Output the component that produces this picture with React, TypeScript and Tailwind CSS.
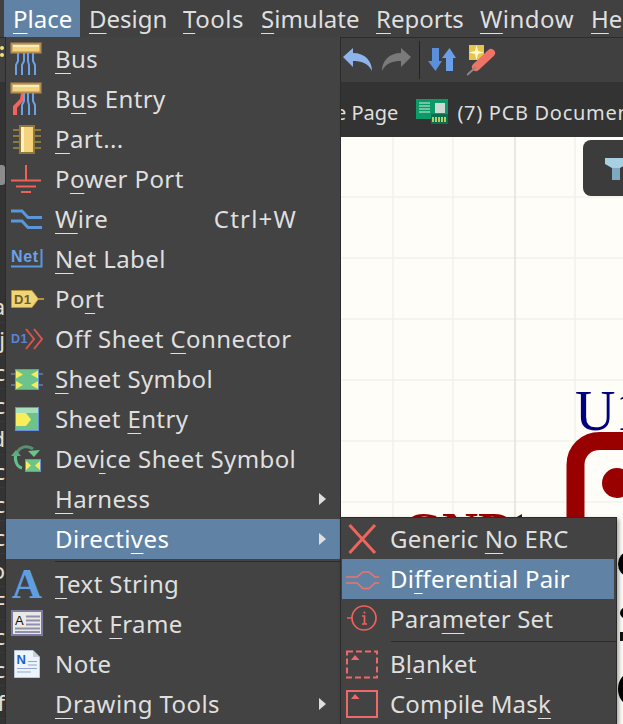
import React from "react";

const L = ({ a = "", u, b = "" }: { a?: string; u?: string; b?: string }) => (
  <span className="whitespace-pre">
    {a}
    {u ? <span className="underline decoration-1 underline-offset-[5px]">{u}</span> : null}
    {b}
  </span>
);

const Ico = ({ children }: { children: React.ReactNode }) => (
  <svg width="36" height="36" viewBox="0 0 36 36" className="shrink-0" fill="none">
    {children}
  </svg>
);

const BLUE = "#6aa2ea";
const RED = "#ee625a";

const Header = () => (
  <>
    <rect x="2.5" y="2.5" width="29" height="9" fill="#f2d37f" stroke="#b68c52" strokeWidth="2" />
    <rect x="4" y="4" width="26" height="2" fill="#fbeec0" />
  </>
);

const BusIcon = () => (
  <Ico>
    <Header />
    <g stroke={BLUE} strokeWidth="2">
      <path d="M9 12V20L7 24V34" />
      <path d="M15 12V20L13 24V34" />
      <path d="M19 12V20L20 24V34" />
      <path d="M24 12V20L26 24V34" />
    </g>
  </Ico>
);
const BusEntryIcon = () => (
  <Ico>
    <Header />
    <path d="M12 12L11 18L4 25V34H8V27L14 20L16 12Z" fill="#f2645c" />
    <g stroke={BLUE} strokeWidth="2">
      <path d="M15 12V20L13 24V34" />
      <path d="M19 12V20L20 24V34" />
      <path d="M24 12V20L26 24V34" />
    </g>
  </Ico>
);
const PartIcon = () => (
  <Ico>
    <g stroke="#8f7a3c" strokeWidth="2">
      <path d="M4 9H10M4 15H10M4 21H10M4 27H10M26 9H32M26 15H32M26 21H32M26 27H32" />
      <rect x="11" y="5" width="14" height="27" fill="#f5d47d" />
    </g>
    <rect x="12" y="6" width="3" height="25" fill="#fdf1c8" />
  </Ico>
);
const PowerIcon = () => (
  <Ico>
    <path d="M17 4V19M2 19.5H32M7 25.5H27M12 31H22" stroke={RED} strokeWidth="2" />
  </Ico>
);
const WireIcon = () => (
  <Ico>
    <path d="M2 10H13L19 16.5H33M2 20H13L19 26.5H33" stroke="#5a97d8" strokeWidth="3" />
  </Ico>
);
const NetIcon = () => (
  <Ico>
    <text x="2" y="21" fontFamily="Liberation Sans" fontWeight="700" fontSize="16" letterSpacing="0.6" fill="#6aa2ea">
      Net
    </text>
    <path d="M2 25.5H32.5V8" stroke="#5a97e0" strokeWidth="2" />
  </Ico>
);
const PortIcon = () => (
  <Ico>
    <path d="M29 18H35" stroke="#b5933f" strokeWidth="2" />
    <path d="M2.5 9.5H23L29.5 18L23 26.5H2.5Z" fill="#f0d478" stroke="#b5933f" />
    <text x="5" y="23" fontFamily="Liberation Sans" fontWeight="700" fontSize="13" fill="#6e5c2a">
      D1
    </text>
  </Ico>
);
const OffIcon = () => (
  <Ico>
    <text x="2" y="22" fontFamily="Liberation Sans" fontWeight="700" fontSize="12.5" fill="#5a82d8">
      D1
    </text>
    <path d="M17 8L25 18L17 28M25 8L33 18L25 28" stroke="#d8544c" strokeWidth="2" />
  </Ico>
);
const SymIcon = () => (
  <Ico>
    <path d="M2 13H7M2 24H7M29 13H34M29 24H34" stroke="#7a9de0" />
    <rect x="6.5" y="8.5" width="23" height="20" fill="#6cc48a" stroke="#6a8fdc" />
    <path d="M7 9.5L14 13.5L7 17.5ZM7 20L14 24L7 28ZM29 9.5L22 13.5L29 17.5ZM29 20L22 24L29 28Z" fill="#f5ec5a" />
  </Ico>
);
const EntryIcon = () => (
  <Ico>
    <rect x="6.5" y="6.5" width="23" height="23" fill="#6cc48a" stroke="#6a8fdc" />
    <rect x="7" y="7" width="22" height="5" fill="#a6e0bb" />
    <path d="M7 12H17L22 18.5L17 25H7Z" fill="#f8ee5c" />
  </Ico>
);
const DeviceIcon = () => (
  <Ico>
    <path d="M8 12C11 5 19 4 24 8" stroke="#5c8f72" strokeWidth="3" />
    <path d="M19 10L31 9L25 16Z" fill="#6cc48a" />
    <path d="M7 13C5 19 8 26 13 27" stroke="#62c08a" strokeWidth="3" />
    <path d="M2 15L12 15L7 9Z" fill="#62a880" />
    <rect x="16.5" y="18.5" width="15" height="12" fill="#6cc48a" stroke="#6a8fdc" />
    <path d="M17 20L22 24.5L17 29ZM31 20L26 24.5L31 29Z" fill="#f5ec5a" />
  </Ico>
);
const TextIcon = () => (
  <Ico>
    <text x="18" y="32" textAnchor="middle" fontFamily="Liberation Serif" fontWeight="700" fontSize="42" fill="#5f9ee0">
      A
    </text>
  </Ico>
);
const FrameIcon = () => (
  <Ico>
    <rect x="3" y="5" width="30" height="24" fill="#ece9e4" stroke="#7c7ca2" strokeWidth="2" />
    <text x="6" y="19" fontFamily="Liberation Sans" fontSize="13" fill="#111">
      A
    </text>
    <path d="M17 10.5H31M17 14.5H31M17 18.5H31M6 22.5H31M6 26H31" stroke="#8f90ad" strokeWidth="2" />
  </Ico>
);
const NoteIcon = () => (
  <Ico>
    <path d="M5.5 4.5H24L30.5 11V31.5H5.5Z" fill="#eef4fb" stroke="#bcc8d8" />
    <path d="M24 4.5V11H30.5Z" fill="#c6cfda" />
    <text x="7.5" y="18" fontFamily="Liberation Sans" fontWeight="700" fontSize="13" fill="#1c62c8">
      N
    </text>
    <path d="M19 15.5H28M19 19H28M8 22.5H28M8 26H22" stroke="#8ea8d2" />
  </Ico>
);
const XIcon = () => (
  <Ico>
    <path d="M5.5 4L31 32M31 4L5.5 32" stroke="#ee655c" strokeWidth="3" />
  </Ico>
);
const DiffIcon = () => (
  <Ico>
    <path d="M2 16H13L19 11H25L31 16H35M2 22H13L19 27.5H25L31 22H35" stroke="#f0736a" strokeWidth="1.5" />
  </Ico>
);
const ParamIcon = () => (
  <Ico>
    <circle cx="20" cy="17" r="12" stroke={RED} strokeWidth="1.7" />
    <path d="M3 17H8M18 15H20.5V23M18 23H23M20.5 10.5V12.5" stroke={RED} strokeWidth="1.7" />
  </Ico>
);
const BlanketIcon = () => (
  <Ico>
    <rect x="3" y="5.5" width="30" height="26" stroke="#f0696a" strokeWidth="2" strokeDasharray="6 3" />
    <path d="M7 14L11 9L15.5 14Z" fill="#f0696a" />
  </Ico>
);
const MaskIcon = () => (
  <Ico>
    <rect x="3" y="5" width="30" height="26" stroke="#f0696a" strokeWidth="2" />
    <path d="M7 13L11 8L15.5 13Z" fill="#f0696a" />
  </Ico>
);

const Arrow = () => (
  <span className="ml-auto mr-[14px] h-0 w-0 border-y-[6px] border-l-[7px] border-y-transparent border-l-[#dedede]" />
);

const Row = ({
  icon,
  children,
  shortcut,
  sub,
  active,
}: {
  icon?: React.ReactNode;
  children: React.ReactNode;
  shortcut?: string;
  sub?: boolean;
  active?: boolean;
}) => (
  <div className={`flex h-10 items-center pl-[3px] ${active ? "bg-[#6083a5] text-white" : ""}`}>
    <div className="w-[36px] shrink-0">{icon}</div>
    <div className="ml-[10px]">{children}</div>
    {shortcut ? <span className="ml-auto mr-[43px] tracking-[1.2px]">{shortcut}</span> : null}
    {sub ? <Arrow /> : null}
  </div>
);

const SubRow = ({ icon, children, active }: { icon: React.ReactNode; children: React.ReactNode; active?: boolean }) => (
  <div className={`flex h-10 items-center pl-[2px] ${active ? "bg-[#6083a5] text-white" : ""}`}>
    <div className="w-[36px] shrink-0">{icon}</div>
    <div className="ml-[10px]">{children}</div>
  </div>
);

const MenuTitle = ({ children, className = "" }: { children: React.ReactNode; className?: string }) => (
  <div className={`flex h-[37px] shrink-0 items-center pl-[9px] ${className}`}>{children}</div>
);

const LETTERS = ["a", "j", "c", "c", "d", "c", "c", "c", "o", "F", "c", "c", "f"];

export default function App() {
  return (
    <div
      className="relative flex h-[724px] w-[623px] flex-col overflow-hidden bg-[#3a3a3a] text-[24px] leading-none text-[#dfdfdf]"
      style={{ fontFamily: '"Noto Sans", sans-serif' }}
    >
      {/* menu bar */}
      <div className="flex h-[37px] shrink-0 whitespace-nowrap bg-[#414141] pl-[4px]">
        <MenuTitle className="w-[76px] bg-[#6083a5] text-white"><L u="P" b="lace" /></MenuTitle>
        <MenuTitle className="w-[94px]"><L u="D" b="esign" /></MenuTitle>
        <MenuTitle className="w-[78px] tracking-[0.5px]"><L u="T" b="ools" /></MenuTitle>
        <MenuTitle className="w-[115px]"><L u="S" b="imulate" /></MenuTitle>
        <MenuTitle className="w-[104px]"><L u="R" b="eports" /></MenuTitle>
        <MenuTitle className="w-[111px] tracking-[0.5px]"><L u="W" b="indow" /></MenuTitle>
        <MenuTitle><L u="H" b="elp" /></MenuTitle>
      </div>

      {/* toolbar */}
      <div className="relative flex h-[45px] shrink-0 items-center border-t border-[#2c2c2c] bg-[#404040] pl-[343px]">
        <div className="absolute left-0 top-[8px] h-[4px] w-[4px] rounded-full bg-[#f2e27a]" />
        <div className="absolute left-0 top-[15px] h-[4px] w-[4px] rounded-full bg-[#f2e27a]" />
        <svg width="30" height="26" viewBox="0 0 30 26" className="shrink-0">
          <path d="M0 10L10 1V6C22 6 29 14 29 24C25 16 18 14 10 14V20Z" fill="#8fb4ea" />
        </svg>
        <svg width="30" height="26" viewBox="0 0 30 26" className="ml-[8px] shrink-0">
          <path d="M30 10L20 1V6C8 6 1 14 1 24C5 16 12 14 20 14V20Z" fill="#7a7a7a" />
        </svg>
        <div className="ml-[8px] h-[38px] w-px bg-[#222222]" />
        <svg width="28" height="26" viewBox="0 0 28 26" className="ml-[8px] shrink-0">
          <path d="M4 1H11V14H14L7.5 24L0 14H4Z" fill="#5a8fdc" />
          <path d="M18 24H25V11H28L21.5 1L14 11H18Z" fill="#6a9ee6" />
        </svg>
        <svg width="30" height="31" viewBox="0 0 30 31" className="ml-[11px] shrink-0">
          <rect x="2" y="0" width="15" height="15" fill="#e6c64c" />
          <path d="M9.5 0L11 6L17 7.5L11 9L9.5 15L8 9L2 7.5L8 6Z" fill="#fff8d0" />
          <path d="M9 22L24 8" stroke="#ee7468" strokeWidth="8" strokeLinecap="round" />
          <path d="M0 30L9 22" stroke="#8a8a8a" strokeWidth="2" />
        </svg>
      </div>

      {/* tabs */}
      <div className="flex h-[55px] shrink-0 items-center whitespace-nowrap bg-[#333333] pl-[335px] pt-[3px] text-[20px]">
        <span className="pt-[3px]">e Page</span>
        <svg width="32" height="25" viewBox="0 0 32 25" className="ml-[18px] shrink-0">
          <rect x="0" y="0" width="32" height="20" fill="#0b9a68" />
          <path d="M3 4H14M3 7H14M3 10H14M3 13H14" stroke="#d6f0e0" />
          <rect x="19" y="4" width="10" height="10" fill="#cfd8d4" />
          <rect x="15" y="15" width="17" height="10" fill="#08704c" />
          <path d="M17 18V23M20 18V23M23 18V23M26 18V23M29 18V23" stroke="#f0ec70" strokeWidth="1.5" />
        </svg>
        <span className="ml-[9px] pt-[3px] tracking-[0.7px]">(7) PCB Document</span>
      </div>

      {/* body */}
      <div className="relative flex min-h-0 flex-1">
        <div className="flex w-[341px] shrink-0 flex-col bg-[#333333] pt-[28px] text-[22px] text-[#e8e0d4]">
          <div className="mb-[105px] h-[20px] w-[5px] shrink-0 rounded-r-[3px] bg-[#8c8c8c]" />
          {LETTERS.map((c, i) => (
            <div key={i} className="flex h-[33px] w-[5px] shrink-0 items-center justify-end overflow-hidden border-b border-[#3a3a3a]">
              <span>{c}</span>
            </div>
          ))}
        </div>
        <div className="relative flex-1 bg-[#fffdf8]">
          <svg width="282" height="587" viewBox="341 137 282 587" className="block">
            <path
              d="M393 137V724M453 137V724M575 137V724M341 197H623M341 258H623M341 319H623M341 380H623M341 441H623M341 502H623"
              stroke="#f3f1ec"
              strokeWidth="1.5"
            />
            <path d="M515 137V724" stroke="#e2e0db" strokeWidth="1.5" />
            <text x="575" y="430" fontFamily="Liberation Serif" fontSize="56" fill="#00007f">
              U1
            </text>
            <path d="M575.5 530V465C575.5 451 586 441 600 441H630" stroke="#990000" strokeWidth="18" fill="none" />
            <circle cx="617" cy="483" r="15" fill="#990000" />
            <text x="403" y="547" fontFamily="Liberation Serif" fontWeight="700" fontSize="50" fill="#990000">
              GND
            </text>
            <path d="M515 518L522 514V518Z" fill="#222" />
            <ellipse cx="628" cy="564" rx="10" ry="12" fill="#000" />
            <ellipse cx="627" cy="613" rx="7" ry="6" fill="#000" />
            <rect x="620" y="632" width="3" height="9" fill="#111" />
            <ellipse cx="630" cy="689" rx="12" ry="16" fill="#000" />
          </svg>
        </div>
      </div>

      {/* filter panel */}
      <div className="absolute left-[583px] top-[140px] flex h-[56px] w-[40px] items-center overflow-hidden rounded-l-[8px] bg-[#3c3c3c] pl-[22px]">
        <svg width="22" height="24" viewBox="0 0 22 24" className="shrink-0">
          <path d="M0 2H22V8L15 12V24H7V12L0 8Z" fill="#a9cfe2" />
          <path d="M7 12H15V24H7Z" fill="#7fa9c0" />
        </svg>
      </div>

      {/* main dropdown */}
      <div className="absolute left-[5px] top-[37px] h-[687px] w-[336px] border-x border-[#2b2b2b] bg-[#434343] pt-[2px] tracking-[0.4px]">
        <Row icon={<BusIcon />}><L u="B" b="us" /></Row>
        <Row icon={<BusEntryIcon />}><L a="B" u="u" b="s Entry" /></Row>
        <Row icon={<PartIcon />}><L u="P" b="art..." /></Row>
        <Row icon={<PowerIcon />}><L a="P" u="o" b="wer Port" /></Row>
        <Row icon={<WireIcon />} shortcut="Ctrl+W"><L u="W" b="ire" /></Row>
        <Row icon={<NetIcon />}><L u="N" b="et Label" /></Row>
        <Row icon={<PortIcon />}><L a="Po" u="r" b="t" /></Row>
        <Row icon={<OffIcon />}><L a="Off Sheet " u="C" b="onnector" /></Row>
        <Row icon={<SymIcon />}><L u="S" b="heet Symbol" /></Row>
        <Row icon={<EntryIcon />}><L a="Sheet " u="E" b="ntry" /></Row>
        <Row icon={<DeviceIcon />}><L a="Dev" u="i" b="ce Sheet Symbol" /></Row>
        <Row sub><L u="H" b="arness" /></Row>
        <Row sub active><L a="Directi" u="v" b="es" /></Row>
        <div className="ml-[49px] -mr-px mb-[2px] mt-[2px] h-px bg-[#2b2b2b]" />
        <Row icon={<TextIcon />}><L u="T" b="ext String" /></Row>
        <Row icon={<FrameIcon />}><L a="Text " u="F" b="rame" /></Row>
        <Row icon={<NoteIcon />}>Note</Row>
        <Row sub><L u="D" b="rawing Tools" /></Row>
      </div>

      {/* submenu */}
      <div className="absolute left-[340px] top-[517px] h-[207px] w-[277px] border-x border-t border-[#2b2b2b] bg-[#434343] pl-px pr-[2px] pt-px tracking-[0.2px] shadow-[2px_2px_4px_rgba(0,0,0,0.35)]">
        <SubRow icon={<XIcon />}><L a="Generic " u="N" b="o ERC" /></SubRow>
        <SubRow icon={<DiffIcon />} active><L a="Di" u="f" b="ferential Pair" /></SubRow>
        <SubRow icon={<ParamIcon />}><L a="Para" u="m" b="eter Set" /></SubRow>
        <div className="-mr-[2px] mb-[2px] ml-[49px] mt-[2px] h-px bg-[#2b2b2b]" />
        <SubRow icon={<BlanketIcon />}><L a="B" u="l" b="anket" /></SubRow>
        <SubRow icon={<MaskIcon />}><L a="Compile Mas" u="k" /></SubRow>
      </div>
    </div>
  );
}
